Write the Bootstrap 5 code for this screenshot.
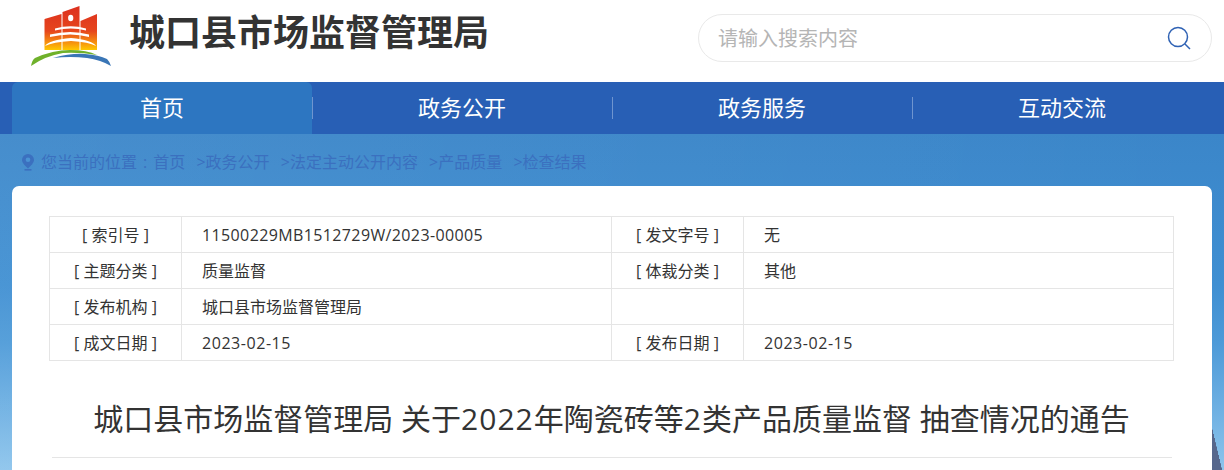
<!DOCTYPE html>
<html lang="zh">
<head>
<meta charset="utf-8">
<title>城口县市场监督管理局</title>
<link href="https://cdn.jsdelivr.net/npm/bootstrap@5.3.0/dist/css/bootstrap.min.css" rel="stylesheet">
<style>
html,body{height:470px;overflow:hidden}
body{font-family:"Open Sans","Noto Sans CJK SC",sans-serif;color:#333;background:#fff}
.top-bar{height:82px;padding:0 12px 0 29px}
.logo-mark{width:84px;height:68px;margin-top:2px}
.site-name{font-size:36px;font-weight:700;color:#333;margin:9px 0 0 16px;line-height:48px}
.search-box{width:514px;height:48px;margin:14px 0 0 0;border:1px solid #e9e9e9;border-radius:24px;padding:0 20px}
.search-box span{font-size:20px;color:#b5b5b5;line-height:1;position:relative;top:1px;left:-1px}
.main-nav{height:52px;background:#285fb5;padding:0 12px}
.nav-cell{width:300px;height:52px;color:#fff;font-size:22px;text-decoration:none;position:relative;padding-bottom:2px}
.nav-cell.is-on{background:#2d76c1;border-radius:6px 6px 0 0}
.nav-cell+.nav-cell::before{content:"";position:absolute;left:0;top:15px;height:22px;width:1px;background:#6f95cf}
.page-bg{height:336px;padding:0 12px;background:linear-gradient(to top right,#56678c 50%,transparent 51%) right 2px bottom/10px 42px no-repeat,linear-gradient(to right,rgba(255,255,255,.06),rgba(0,0,0,0)),linear-gradient(to bottom,#3b86c9 0,#3f8fd2 45%,#4d9ad8 62%,#8cc4ec 100%)}
.crumbs{height:52px;padding:4px 0 0 10px;font-size:16px;color:#3b70bf}
.crumbs svg{width:12px;height:17px;margin-right:7px}
.crumb-sep{margin:0 6px}
.crumb-link{margin-left:11.200px}
.sheet{background:#fff;border-radius:7px 7px 0 0;padding:30px 38px 0 37px;height:284px}
.info-grid{width:1124px;table-layout:fixed;border-collapse:collapse;font-size:16px;color:#333}
.info-grid td{border:1px solid #e5e5e5;height:36px;padding:0 20px;line-height:1;vertical-align:middle}
.info-grid td.tag{text-align:center;padding:0}
.id-run{letter-spacing:.38px}
.num-run{letter-spacing:.55px}
.doc-title{font-size:30px;font-weight:400;color:#333;text-align:center;margin:0;line-height:1;padding-top:43px;white-space:nowrap}
.title-num{letter-spacing:1px}
.doc-rule{height:1px;background:#e5e5e5;margin:23px 2px 0 3px;width:1120px}
</style>
</head>
<body>
<header class="top-bar d-flex justify-content-between">
  <div class="d-flex align-items-start">
    <svg class="logo-mark" viewBox="0 0 84 68" aria-hidden="true">
      <defs>
        <linearGradient id="lg" gradientUnits="userSpaceOnUse" x1="0" y1="6" x2="0" y2="48"><stop offset="0" stop-color="#dd321f"/><stop offset=".55" stop-color="#e6461d"/><stop offset=".8" stop-color="#f58a10"/><stop offset="1" stop-color="#ffc800"/></linearGradient>
      </defs>
      <path d="M15.500 17 L32.500 12 V48 H15.500Z M33.500 10 L50.500 4 V48 H33.500Z M51.500 19 L68 12 V48 H51.500Z" fill="url(#lg)"/>
      <ellipse cx="41.700" cy="16" rx="2.600" ry="3.300" fill="#fff"/>
      <path d="M26 26.500 Q42 22 57 26.500 L57 28.500 Q42 24.500 26 28.500Z M21 32.500 Q42 27.500 60 32.500 L60 35 Q42 30 21 35Z M16 44 Q20 38 42 36 Q63 38 67 44 Q60 40 42 39 Q24 40 16 44Z" fill="#fff"/>
      <path d="M2 64 Q3 58 6 56 Q24 48 41 48 Q58 48 68 53 Q50 50 34 51 Q16 54 2 64Z" fill="#6fb12b"/>
      <path d="M24 56 Q42 51 56 52 Q70 53 78 57 Q81 60 82 64 Q72 58 58 56 Q42 54 24 56Z" fill="#3a76b6"/>
    </svg>
    <h1 class="site-name">城口县市场监督管理局</h1>
  </div>
  <div class="search-box d-flex align-items-center justify-content-between">
    <span>请输入搜索内容</span>
    <svg width="24" height="24" viewBox="0 0 24 24" fill="none" stroke="#2f62b4" stroke-width="1.500" aria-hidden="true"><circle cx="11" cy="11" r="9.500"/><path d="M18 18 L23 23"/></svg>
  </div>
</header>
<nav class="main-nav d-flex">
  <a class="nav-cell is-on d-flex align-items-center justify-content-center" href="#">首页</a>
  <a class="nav-cell d-flex align-items-center justify-content-center" href="#">政务公开</a>
  <a class="nav-cell d-flex align-items-center justify-content-center" href="#">政务服务</a>
  <a class="nav-cell d-flex align-items-center justify-content-center" href="#">互动交流</a>
</nav>
<main class="page-bg">
  <div class="crumbs d-flex align-items-center">
    <svg viewBox="0 0 12 17" aria-hidden="true"><path d="M6 0a6 6 0 0 1 6 6c0 3-3.500 6-6 8.500C3.500 12 0 9 0 6a6 6 0 0 1 6-6Z" fill="#3b70bf"/><circle cx="6" cy="5.800" r="2.300" fill="#4a93d4"/><rect x="2.500" y="15" width="7" height="1.600" fill="#3b70bf"/></svg>
    <span>您当前的位置</span><span class="crumb-sep">:</span><span>首页</span>
    <span class="crumb-link">&gt;政务公开</span>
    <span class="crumb-link">&gt;法定主动公开内容</span>
    <span class="crumb-link">&gt;产品质量</span>
    <span class="crumb-link">&gt;检查结果</span>
  </div>
  <section class="sheet">
    <table class="info-grid">
      <colgroup><col style="width:132px"><col style="width:430px"><col style="width:132px"><col style="width:430px"></colgroup>
      <tr><td class="tag">[ 索引号 ]</td><td><span class="id-run">11500229MB1512729W/2023-00005</span></td><td class="tag">[ 发文字号 ]</td><td>无</td></tr>
      <tr><td class="tag">[ 主题分类 ]</td><td>质量监督</td><td class="tag">[ 体裁分类 ]</td><td>其他</td></tr>
      <tr><td class="tag">[ 发布机构 ]</td><td>城口县市场监督管理局</td><td></td><td></td></tr>
      <tr><td class="tag">[ 成文日期 ]</td><td><span class="num-run">2023-02-15</span></td><td class="tag">[ 发布日期 ]</td><td><span class="num-run">2023-02-15</span></td></tr>
    </table>
    <h2 class="doc-title">城口县市场监督管理局 关于<span class="title-num">2022</span>年陶瓷砖等<span class="title-num">2</span>类产品质量监督 抽查情况的通告</h2>
    <div class="doc-rule"></div>
  </section>
</main>
<script src="https://cdn.jsdelivr.net/npm/bootstrap@5.3.0/dist/js/bootstrap.bundle.min.js"></script>
</body>
</html>
